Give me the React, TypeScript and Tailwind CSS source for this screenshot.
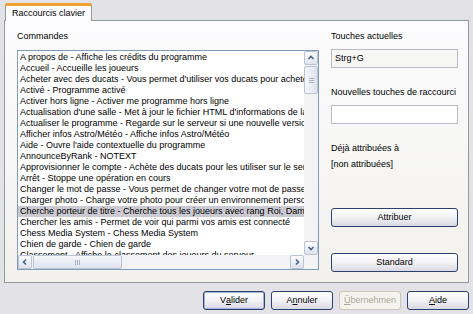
import React from "react";

const commands = [
  "A propos de - Affiche les crédits du programme",
  "Accueil - Accueille les joueurs",
  "Acheter avec des ducats - Vous permet d'utiliser vos ducats pour acheter des services",
  "Activé - Programme activé",
  "Activer hors ligne - Activer me programme hors ligne",
  "Actualisation d'une salle - Met à jour le fichier HTML d'informations de la salle",
  "Actualiser le programme - Regarde sur le serveur si une nouvelle version existe",
  "Afficher infos Astro/Météo - Affiche infos Astro/Météo",
  "Aide - Ouvre l'aide contextuelle du programme",
  "AnnounceByRank - NOTEXT",
  "Approvisionner le compte - Achète des ducats pour les utiliser sur le serveur",
  "Arrêt - Stoppe une opération en cours",
  "Changer le mot de passe - Vous permet de changer votre mot de passe",
  "Charger photo - Charge votre photo pour créer un environnement personnalisé",
  "Cherche porteur de titre - Cherche tous les joueurs avec rang Roi, Dame, Prince",
  "Chercher les amis - Permet de voir qui parmi vos amis est connecté",
  "Chess Media System - Chess Media System",
  "Chien de garde - Chien de garde",
  "Classement - Affiche le classement des joueurs du serveur",
];

const SELECTED = 14;

function Arrow({ dir }: { dir: "up" | "down" | "left" | "right" }) {
  const d = {
    up: "M1.5 5 L4 2.5 L6.5 5",
    down: "M1.5 3 L4 5.5 L6.5 3",
    left: "M5 1.5 L2.5 4 L5 6.5",
    right: "M3 1.5 L5.5 4 L3 6.5",
  }[dir];
  return (
    <svg width="8" height="8" viewBox="0 0 8 8">
      <path d={d} fill="none" stroke="#4d6185" strokeWidth="1.6" />
    </svg>
  );
}

function ScrollBtn({ dir }: { dir: "up" | "down" | "left" | "right" }) {
  return (
    <div className="w-[14px] h-[14px] shrink-0 flex items-center justify-center rounded-[2px] border border-[#bac3d6] bg-gradient-to-b from-[#fdfdfe] to-[#dde2ee]">
      <Arrow dir={dir} />
    </div>
  );
}

function XpButton({
  children,
  className = "",
  isDefault = false,
  disabled = false,
}: {
  children: React.ReactNode;
  className?: string;
  isDefault?: boolean;
  disabled?: boolean;
}) {
  return (
    <div
      className={
        "h-[19px] flex items-center justify-center rounded-[3px] border text-[9px] leading-none " +
        (disabled
          ? "border-[#c9c7ba] bg-[#f4f3ee] text-[#aca899] "
          : "border-[#2e3f6b] bg-gradient-to-b from-[#ffffff] via-[#f2f2f5] to-[#d9d9e2] text-black ") +
        (isDefault ? "shadow-[inset_0_0_0_1px_#9db6e4] " : "") +
        className
      }
    >
      {children}
    </div>
  );
}

export default function App() {
  return (
    <div
      className="w-[473px] h-[314px] bg-[#e3e2e6] text-black text-[9px] overflow-hidden"
      style={{ fontFamily: '"Liberation Sans", Arial, sans-serif' }}
    >
      {/* tab strip */}
      <div className="pl-[5px] pt-[3px] flex">
        <div className="relative z-10 -mb-px w-[87px] h-[18px] bg-[#fcfcfe] border border-b-0 border-[#919b9c] rounded-t-[3px] flex items-center pl-[6px]">
          <div className="absolute -top-px -left-px -right-px h-[3px] rounded-t-[3px] bg-[#f0a12f]" />
          <span className="leading-none mt-[1px]">Raccourcis clavier</span>
        </div>
      </div>

      {/* tab panel */}
      <div className="mx-[4px] h-[263px] border border-[#919b9c] bg-gradient-to-b from-[#fcfcfe] to-[#f2f1ed] flex pl-[12px] pt-[9px]">
        {/* commands */}
        <div className="w-[302px] flex flex-col">
          <div className="h-[12px] leading-[12px] mb-[8px]">Commandes</div>
          <div className="h-[220px] border border-[#7f9db9] bg-white flex flex-col">
            <div className="flex h-[204px]">
              <div className="flex-1 overflow-hidden pt-px">
                {commands.map((c, i) => (
                  <div
                    key={i}
                    className={
                      "h-[11px] leading-[11px] pl-[2px] whitespace-nowrap " +
                      (i === SELECTED ? "bg-[#cbcad2]" : "")
                    }
                  >
                    {c}
                  </div>
                ))}
              </div>
              <div className="w-[14px] flex flex-col bg-[#f3f3f6]">
                <ScrollBtn dir="up" />
                <div className="flex-1 pt-[1px]">
                  <div className="h-[28px] rounded-[2px] border border-[#bac3d6] bg-gradient-to-r from-[#f6f7fb] to-[#dfe3ee] flex flex-col items-center justify-center gap-[1px]">
                    <div className="w-[5px] h-px bg-[#a9b1c6]" />
                    <div className="w-[5px] h-px bg-[#a9b1c6]" />
                    <div className="w-[5px] h-px bg-[#a9b1c6]" />
                  </div>
                </div>
                <ScrollBtn dir="down" />
              </div>
            </div>
            <div className="flex h-[14px] bg-[#f3f3f6]">
              <ScrollBtn dir="left" />
              <div className="flex-1 pl-[1px]">
                <div className="w-[89px] h-[14px] rounded-[2px] border border-[#bac3d6] bg-gradient-to-b from-[#f6f7fb] to-[#dfe3ee] flex items-center justify-center gap-[1px]">
                  <div className="w-px h-[5px] bg-[#a9b1c6]" />
                  <div className="w-px h-[5px] bg-[#a9b1c6]" />
                  <div className="w-px h-[5px] bg-[#a9b1c6]" />
                </div>
              </div>
              <ScrollBtn dir="right" />
              <div className="w-[14px] bg-[#f3f3f6]" />
            </div>
          </div>
        </div>

        {/* shortcut keys */}
        <div className="ml-[12px] w-[127px] flex flex-col">
          <div className="h-[12px] leading-[12px]">Touches actuelles</div>
          <div className="mt-[7px] h-[19px] border border-[#b8bcc6] bg-[#f6f6f4] flex items-center pl-[3px]">
            Strg+G
          </div>
          <div className="mt-[18px] h-[12px] leading-[12px] whitespace-nowrap">
            Nouvelles touches de raccourci
          </div>
          <div className="mt-[7px] h-[19px] border border-[#b8bcc6] bg-white" />
          <div className="mt-[18px] h-[12px] leading-[12px]">Déjà attribuées à</div>
          <div className="mt-[4px] h-[12px] leading-[12px]">[non attribuées]</div>
          <XpButton className="mt-[38px]">Attribuer</XpButton>
          <XpButton className="mt-[26px]">Standard</XpButton>
        </div>
      </div>

      {/* dialog buttons */}
      <div className="flex justify-end gap-[6px] pr-[4px] pt-[8px]">
        <XpButton className="w-[62px]" isDefault>
          V<span className="underline">a</span>lider
        </XpButton>
        <XpButton className="w-[62px]">
          A<span className="underline">n</span>nuler
        </XpButton>
        <XpButton className="w-[62px]" disabled>
          <span className="underline">Ü</span>bernehmen
        </XpButton>
        <XpButton className="w-[62px]">
          <span className="underline">A</span>ide
        </XpButton>
      </div>
    </div>
  );
}
